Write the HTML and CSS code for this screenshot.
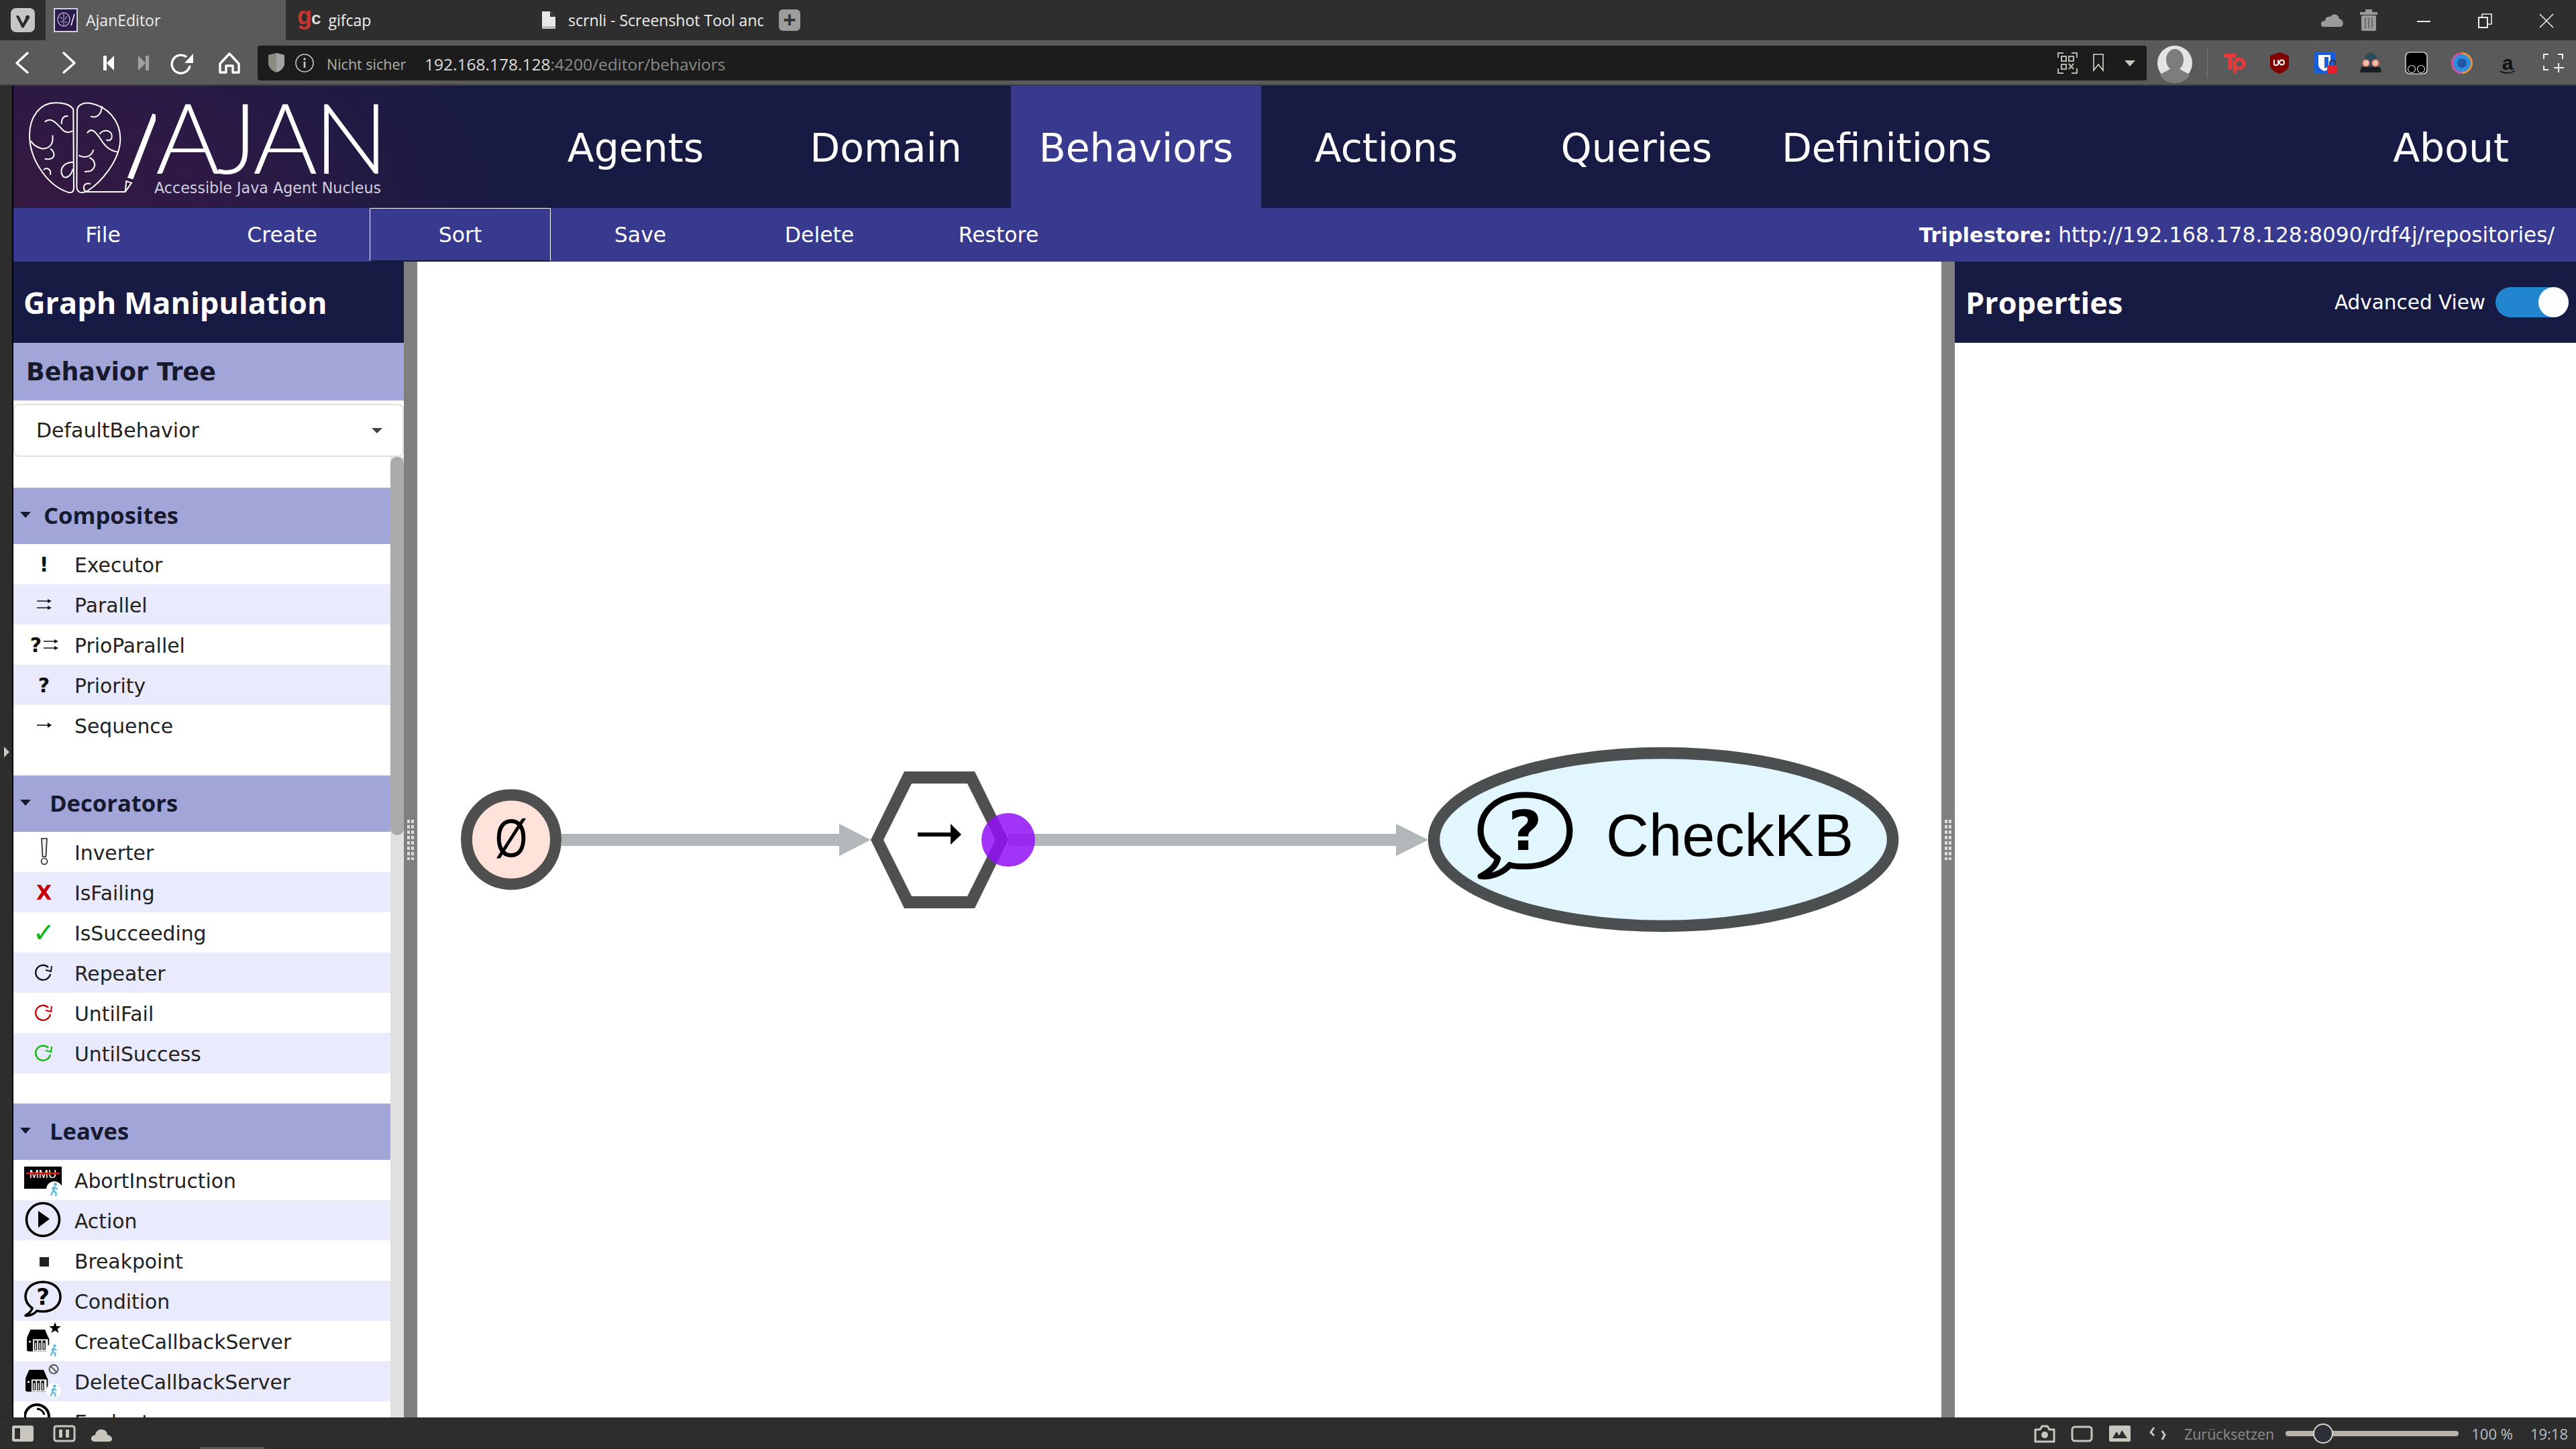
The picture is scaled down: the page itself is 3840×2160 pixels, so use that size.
FILE: index.html
```html
<!DOCTYPE html>
<html lang="en">
<head>
  <meta charset="UTF-8">
  <title>AjanEditor</title>
  <link rel="stylesheet" href="styles.css">
</head>
<body>

  <svg class="defs" width="0" height="0">
    <symbol id="walker" viewBox="0 0 24 24">
      <circle cx="12" cy="12" r="12" fill="#fff"/>
      <circle cx="13.5" cy="4.5" r="2.4" fill="#5cb8dc"/>
      <path d="M12.5 8 L10.5 14 L7 21 M11 14 L14.5 17 L14.5 22 M12.5 8.5 L16.5 12 M12 8.5 L8.5 11.5" fill="none" stroke="#5cb8dc" stroke-width="2.4"/>
    </symbol>
    <symbol id="bubble" viewBox="0 0 56 56" preserveAspectRatio="none">
      <path d="M12 41 C5 36 2 30 2 24 C2 11 13 2 28 2 C43 2 54 11 54 24 C54 37 43 46 28 46 C25 46 22 46 19 45 C16 49 9 53 2 52 C7 49 11 46 12 41 Z" fill="none" stroke="#000" stroke-width="3.6" stroke-linejoin="round"/>
      <text x="28" y="36" text-anchor="middle" class="bubble-mark">?</text>
    </symbol>
    <symbol id="store" viewBox="0 0 40 40">
      <path d="M6 0 H30 L36 14 H0 Z" fill="#000"/>
      <rect x="0" y="13" width="37" height="23" rx="3" fill="#000"/>
      <rect x="10" y="16" width="25" height="20" fill="#fff"/>
      <path d="M12 18 H17 V34 H12 Z M19 18 H24 V34 H19 Z M26 18 H31 V34 H26 Z" fill="#111"/>
      <path d="M13.5 22 H15.5 V33 H13.5 Z M20.5 22 H22.5 V33 H20.5 Z M27.5 22 H29.5 V33 H27.5 Z" fill="#ddd"/>
      <circle cx="5" cy="20" r="1.8" fill="#fff"/>
    </symbol>
    <symbol id="loop" viewBox="0 0 28 26">
      <path d="M20 5 A11 11 0 1 0 23 15" fill="none" stroke="currentColor" stroke-width="2.4"/>
      <path d="M25 3 L24 11 L16 9" fill="none" stroke="currentColor" stroke-width="2"/>
    </symbol>
    <symbol id="arrow-one" viewBox="0 0 24 12">
      <path d="M1 6 H21" stroke="#111" stroke-width="1.6"/>
      <path d="M17 2 L23 6 L17 10 Z" fill="#111"/>
    </symbol>
    <symbol id="arrow-two" viewBox="0 0 24 18">
      <path d="M1 4 H21 M1 14 H21" stroke="#111" stroke-width="1.6"/>
      <path d="M17 1 L23 4 L17 7 Z M17 11 L23 14 L17 17 Z" fill="#111"/>
    </symbol>
  </svg>

  <!-- browser tabs -->
  <div class="tabbar">
    <div class="tab-logo">
      <svg width="36" height="36" viewBox="0 0 36 36">
        <rect width="36" height="36" rx="8" fill="#c6c6c6"/>
        <path d="M8 12 C10 10 12 11 13 13 L18 23 L22 15 C21 11 27 9 28 13 C29 15 27 16 26 18 L20 28 C19 30 17 30 16 28 Z" fill="#2b2b2b"/>
      </svg>
    </div>
    <div class="tab tab-active">
      <svg width="36" height="36" viewBox="0 0 36 36">
        <rect x="1" y="1" width="34" height="34" fill="#2b1a4c" stroke="#cfcfd8" stroke-width="2"/>
        <ellipse cx="15" cy="17" rx="9" ry="10" fill="none" stroke="#cfc9e0" stroke-width="1.2"/>
        <path d="M15 7 V27 M9 13 L13 16 M20 12 L17 17 M10 21 L14 19 M20 22 L17 20" stroke="#cfc9e0" stroke-width="1"/>
        <path d="M31 9 L26 26" stroke="#e6e6f0" stroke-width="1.6"/>
      </svg>
      <span>AjanEditor</span>
    </div>
    <div class="tab tab-gifcap">
      <span class="gc-icon"><span class="gc-g">g</span><span class="gc-c">c</span></span>
      <span>gifcap</span>
    </div>
    <div class="tab tab-fade">
      <svg width="20" height="26" viewBox="0 0 20 26">
        <path d="M0 0 H12 L20 8 V26 H0 Z" fill="#e8e8e8"/>
        <path d="M12 0 L20 8 H12 Z" fill="#333"/>
        <rect y="22" width="20" height="4" fill="#bbb"/>
      </svg>
      <span>scrnli - Screenshot Tool and</span>
    </div>
    <div class="tab-add">+</div>
    <div class="spacer"></div>
    <svg class="window-controls" width="380" height="60" viewBox="3460 0 380 60">
      <path d="M3464 40 C3458 40 3458 31 3466 31 C3466 26 3470 24 3474 25 C3476 20 3486 20 3487 28 C3494 29 3495 40 3488 40 Z" fill="#9a9a9a"/>
      <rect x="3518" y="18" width="26" height="4" fill="#9a9a9a"/>
      <rect x="3526" y="14" width="10" height="4" fill="#9a9a9a"/>
      <rect x="3520" y="23" width="22" height="23" rx="2" fill="#9a9a9a"/>
      <path d="M3526 26 V42 M3531 26 V42 M3536 26 V42" stroke="#555" stroke-width="1.4"/>
      <rect x="3603" y="31" width="20" height="2" fill="#eee"/>
      <path d="M3695 26 H3708 V41 H3695 Z" fill="none" stroke="#eee" stroke-width="2"/>
      <path d="M3700 26 V21 H3714 V36 H3708" fill="none" stroke="#eee" stroke-width="1.6"/>
      <path d="M3786 21 L3806 41 M3806 21 L3786 41" stroke="#eee" stroke-width="1.6"/>
    </svg>
  </div>

  <!-- address bar -->
  <div class="addressbar">
    <svg class="nav-icons" width="384" height="66" viewBox="0 60 384 66">
      <path d="M41 79 L25 94 L41 108" fill="none" stroke="#fff" stroke-width="3.4" stroke-linecap="round" stroke-linejoin="round"/>
      <path d="M95 79 L111 94 L95 108" fill="none" stroke="#fff" stroke-width="3.4" stroke-linecap="round" stroke-linejoin="round"/>
      <path d="M154 83 H159 V105 H154 Z M170 83 V105 L159 94 Z" fill="#fff"/>
      <path d="M217 83 H222 V105 H217 Z M206 83 V105 L217 94 Z" fill="#a2a2a2"/>
      <path d="M283 98 A13.5 13.5 0 1 1 278 85" fill="none" stroke="#fff" stroke-width="3.4"/>
      <path d="M288 80 V94 H275 Z" fill="#fff"/>
      <path d="M328 95 L342 80 L356 95 V108 H347 V98 H337 V108 H328 Z" fill="none" stroke="#fff" stroke-width="3.4" stroke-linejoin="round"/>
    </svg>
    <div class="urlbar">
      <svg width="90" height="30" viewBox="0 0 90 30">
        <path d="M2 3 L14 0 L26 3 V15 C26 22 20 27 14 29 C8 27 2 22 2 15 Z" fill="#8d8a84"/>
        <path d="M14 0 L26 3 V15 C26 22 20 27 14 29 Z" fill="#a3a3a3"/>
        <circle cx="56" cy="15" r="13" fill="none" stroke="#c8c8c0" stroke-width="1.6"/>
        <circle cx="56" cy="9" r="1.8" fill="#c8c8c0"/>
        <rect x="54.6" y="13" width="2.8" height="9" fill="#c8c8c0"/>
      </svg>
      <span class="url-note">Nicht sicher</span>
      <span class="url-text">192.168.178.128<span class="url-dim">:4200/editor/behaviors</span></span>
      <div class="spacer"></div>
      <svg width="134" height="52" viewBox="3066 68 134 52">
        <path d="M3068 86 V79 H3076 M3088 79 H3096 V86 M3068 102 V109 H3076 M3088 109 H3096 V102" fill="none" stroke="#b9b9b0" stroke-width="2"/>
        <path d="M3073 84 H3080 V91 H3073 Z M3084 84 H3091 V91 H3084 Z M3073 96 H3080 V103 H3073 Z" fill="none" stroke="#b9b9b0" stroke-width="2"/>
        <path d="M3084 95 L3091 103 M3091 95 L3084 103" stroke="#b9b9b0" stroke-width="2"/>
        <path d="M3121 81 H3135 V105 L3128 96 L3121 105 Z" fill="none" stroke="#d8d8d0" stroke-width="1.6"/>
        <path d="M3167 90 H3183 L3175 99 Z" fill="#c8c8c0"/>
      </svg>
    </div>
    <svg class="ext-icons" width="640" height="66" viewBox="3200 60 640 66">
      <ellipse cx="3242" cy="94" rx="26" ry="26" fill="#e4e4e4"/>
      <ellipse cx="3242" cy="89" rx="13" ry="16" fill="#7d7d7d"/>
      <path d="M3220 112 C3225 106 3235 106 3236 100 H3248 C3249 106 3259 106 3264 112 A26 26 0 0 1 3220 112 Z" fill="#7d7d7d"/>
      <rect x="3290" y="72" width="1" height="44" fill="#777"/>
      <path d="M3315 80 H3333 V86 H3328 V103 H3321 V86 H3315 Z" fill="#e83a3a"/>
      <circle cx="3338" cy="95" r="7" fill="none" stroke="#e83a3a" stroke-width="5"/>
      <rect x="3329" y="92" width="5" height="17" fill="#e83a3a"/>
      <path d="M3398 78 L3412 83 V97 C3412 103 3405 108 3398 110 C3391 108 3384 103 3384 97 V83 Z" fill="#800000"/>
      <path d="M3390 89 V95 C3390 98 3396 98 3396 95 V89 M3398 93 A3.5 3.5 0 1 1 3405 93 A3.5 3.5 0 1 1 3398 93" fill="none" stroke="#fff" stroke-width="2"/>
      <rect x="3450" y="78" width="32" height="32" rx="3" fill="#175ddc"/>
      <path d="M3456 82 H3474 V96 C3474 101 3470 104 3465 106 C3460 104 3456 101 3456 96 Z" fill="#fff"/>
      <path d="M3465 85 H3471 V96 C3471 98 3468 101 3465 102 Z" fill="#175ddc"/>
      <path d="M3473 97 V94 A4 4 0 0 1 3481 94 V97" fill="none" stroke="#333" stroke-width="2"/>
      <rect x="3469" y="97" width="15" height="13" rx="1" fill="#e3222c"/>
      <path d="M3534 78 C3526 78 3524 90 3524 96 L3518 108 H3550 L3544 96 C3544 90 3542 78 3534 78 Z" fill="#2b4a5c"/>
      <path d="M3520 100 H3548 L3550 108 H3518 Z" fill="#161d24"/>
      <circle cx="3527" cy="94" r="5" fill="#e8c0b0" stroke="#e86a50" stroke-width="1.5"/>
      <circle cx="3541" cy="94" r="5" fill="#e8c0b0" stroke="#e86a50" stroke-width="1.5"/>
      <rect x="3586" y="78" width="32" height="32" rx="6" fill="#000" stroke="#fff" stroke-width="1.2"/>
      <circle cx="3595" cy="103" r="5.5" fill="none" stroke="#ddd" stroke-width="1.2"/>
      <circle cx="3609" cy="103" r="5.5" fill="none" stroke="#ddd" stroke-width="1.2"/>
      <circle cx="3670" cy="94" r="16" fill="#e8933c"/>
      <path d="M3670 78 A16 16 0 0 0 3654 94 A16 16 0 0 0 3670 110 Z" fill="#cf4fa0"/>
      <circle cx="3670" cy="94" r="13" fill="#2f8de0"/>
      <circle cx="3670" cy="94" r="7" fill="#2456a8"/>
      <text x="3738" y="104" text-anchor="middle" class="ext-amazon">a</text>
      <path d="M3727 106 C3733 110 3743 110 3749 105" fill="none" stroke="#111" stroke-width="1.6"/>
      <path d="M3792 88 V81 H3799 M3813 81 H3820 V88 M3792 98 V104 H3799" fill="none" stroke="#eee" stroke-width="2"/>
      <path d="M3814 94 V108 M3807 101 H3822" stroke="#eee" stroke-width="2"/>
    </svg>
  </div>

  <div class="page">
    <div class="frame"><span class="frame-arrow"></span></div>

    <div class="app">
      <div class="topnav">
        <div class="logo">
          <svg width="212" height="180" viewBox="0 0 636 540" class="logo-mark">
            <g fill="none" stroke="#fff" stroke-width="6">
              <path d="M268 100 C255 75 215 68 185 70 C120 72 72 130 72 215 C72 320 150 440 245 470 C262 474 270 468 270 450 Z"/>
              <path d="M285 100 C290 75 320 68 345 72 C420 85 478 150 478 230 C478 320 400 420 330 465 C300 478 285 470 283 445 Z"/>
              <path d="M140 155 C170 130 195 165 215 185 C230 205 250 205 265 195"/>
              <path d="M215 165 C215 135 230 125 245 130"/>
              <path d="M175 215 C180 250 165 275 130 275 C105 270 85 255 78 240"/>
              <path d="M165 275 C190 290 190 330 140 320"/>
              <path d="M268 335 C240 335 210 350 215 385 C225 420 258 400 266 365"/>
              <path d="M135 370 C145 358 170 362 165 392"/>
              <path d="M345 130 C370 140 395 125 395 85"/>
              <path d="M330 205 C350 175 370 205 385 225 C410 265 430 285 470 290"/>
              <path d="M385 210 C400 185 445 190 440 225 C435 240 425 240 415 235"/>
              <path d="M292 305 C320 320 350 310 358 280"/>
              <path d="M340 315 C365 325 375 355 345 375 L318 378"/>
              <path d="M345 432 C315 425 305 450 325 468"/>
              <path d="M320 468 H500 L528 428 L505 420 L500 468"/>
              <path d="M622 118 L645 125 L535 412 L510 405 Z" fill="#fff" stroke="none"/>
            </g>
          </svg>
          <div class="logo-text">
            <span class="logo-name">AJAN</span>
            <span class="logo-tag">Accessible Java Agent Nucleus</span>
          </div>
        </div>
        <a class="nav-item">Agents</a>
        <a class="nav-item">Domain</a>
        <a class="nav-item nav-active">Behaviors</a>
        <a class="nav-item">Actions</a>
        <a class="nav-item">Queries</a>
        <a class="nav-item">Definitions</a>
        <a class="nav-item nav-right">About</a>
      </div>

      <div class="toolbar">
        <a class="tool">File</a>
        <a class="tool">Create</a>
        <a class="tool tool-focus">Sort</a>
        <a class="tool">Save</a>
        <a class="tool">Delete</a>
        <a class="tool">Restore</a>
        <div class="triplestore"><b>Triplestore:</b> http://192.168.178.128:8090/rdf4j/repositories/</div>
      </div>

      <div class="workspace">
        <div class="sidebar">
          <div class="panel-head"><h2>Graph Manipulation</h2></div>
          <div class="tree-head">Behavior Tree</div>
          <div class="select">DefaultBehavior<span class="select-caret"></span></div>
          <div class="palette">
            <div class="palette-list">
              <div class="band band-first"><span class="caret"></span>Composites</div>
              <div class="row"><span class="ico ico-bold">!</span>Executor</div>
              <div class="row alt"><span class="ico"><svg width="24" height="18"><use href="#arrow-two"/></svg></span>Parallel</div>
              <div class="row"><span class="ico ico-pair"><span class="ico-bold">?</span><svg width="24" height="18"><use href="#arrow-two"/></svg></span>PrioParallel</div>
              <div class="row alt"><span class="ico ico-bold">?</span>Priority</div>
              <div class="row"><span class="ico"><svg width="24" height="12"><use href="#arrow-one"/></svg></span>Sequence</div>

              <div class="band"><span class="caret"></span>Decorators</div>
              <div class="row">
                <span class="ico">
                  <svg width="12" height="42" viewBox="0 0 12 42">
                    <path d="M2 1 H10 L8.5 28 H3.5 Z" fill="#eee" stroke="#222" stroke-width="1.6"/>
                    <circle cx="6" cy="35" r="4.5" fill="#fff" stroke="#222" stroke-width="1.6"/>
                  </svg>
                </span>Inverter
              </div>
              <div class="row alt"><span class="ico ico-bold ico-red ico-x">X</span>IsFailing</div>
              <div class="row"><span class="ico ico-green ico-check">✓</span>IsSucceeding</div>
              <div class="row alt"><span class="ico"><svg width="28" height="26"><use href="#loop"/></svg></span>Repeater</div>
              <div class="row"><span class="ico ico-red"><svg width="28" height="26"><use href="#loop"/></svg></span>UntilFail</div>
              <div class="row alt"><span class="ico ico-green"><svg width="28" height="26"><use href="#loop"/></svg></span>UntilSuccess</div>

              <div class="band"><span class="caret"></span>Leaves</div>
              <div class="row">
                <span class="ico">
                  <svg width="60" height="60" viewBox="0 0 60 60">
                    <rect x="0" y="10" width="56" height="33" fill="#000"/>
                    <text x="28" y="27" text-anchor="middle" class="mmu">MMU</text>
                    <rect x="3" y="19" width="50" height="2.4" fill="#d81818"/>
                    <use href="#walker" x="33" y="32" width="24" height="24"/>
                  </svg>
                </span>AbortInstruction
              </div>
              <div class="row alt">
                <span class="ico">
                  <svg width="60" height="60" viewBox="0 0 60 60">
                    <circle cx="28" cy="29" r="24.5" fill="none" stroke="#000" stroke-width="3.6"/>
                    <path d="M21 16 L38 28 L21 41 Z" fill="#000"/>
                  </svg>
                </span>Action
              </div>
              <div class="row">
                <span class="ico"><span class="square"></span></span>Breakpoint
              </div>
              <div class="row alt">
                <span class="ico">
                  <svg width="60" height="60" viewBox="0 0 60 60"><use href="#bubble" x="0" y="0" width="56" height="56"/></svg>
                </span>Condition
              </div>
              <div class="row">
                <span class="ico">
                  <svg width="60" height="60" viewBox="0 0 60 60">
                    <use href="#store" x="4" y="13" width="36" height="36"/>
                    <path d="M46 2 L48.3 8 H54.8 L49.6 12 L51.5 18 L46 14.5 L40.5 18 L42.4 12 L37.2 8 H43.7 Z" fill="#000"/>
                    <use href="#walker" x="33" y="33" width="22" height="22"/>
                  </svg>
                </span>CreateCallbackServer
              </div>
              <div class="row alt">
                <span class="ico">
                  <svg width="60" height="60" viewBox="0 0 60 60">
                    <use href="#store" x="2" y="13" width="36" height="36"/>
                    <circle cx="44" cy="12" r="6.5" fill="none" stroke="#555" stroke-width="2"/>
                    <path d="M39.5 7.5 L48.5 16.5" stroke="#555" stroke-width="2"/>
                    <use href="#walker" x="33" y="33" width="22" height="22"/>
                  </svg>
                </span>DeleteCallbackServer
              </div>
              <div class="row">
                <span class="ico">
                  <svg width="60" height="60" viewBox="0 0 60 60">
                    <circle cx="19" cy="23" r="18" fill="none" stroke="#000" stroke-width="4"/>
                    <path d="M19 11 A12 12 0 0 1 30 20" fill="none" stroke="#000" stroke-width="3"/>
                  </svg>
                </span>Evaluate
              </div>
            </div>
            <div class="scrollbar"><div class="scroll-thumb"></div></div>
          </div>
        </div>

        <div class="gutter"><span class="grip"></span></div>

        <div class="canvas">
          <svg class="graph" width="2272" height="1723" viewBox="622 390 2272 1723">
            <rect x="837" y="1243" width="420" height="18" fill="#b2b7ba"/>
            <path d="M1251 1228 L1298 1252 L1251 1276 Z" fill="#b2b7ba"/>
            <rect x="1503" y="1243" width="584" height="18" fill="#b2b7ba"/>
            <path d="M2081 1228 L2129 1252 L2081 1276 Z" fill="#b2b7ba"/>

            <circle cx="762" cy="1251.5" r="66.5" fill="#ffe2da" stroke="#4f4f4f" stroke-width="17"/>
            <text transform="translate(762 1277) scale(0.78 1)" text-anchor="middle" class="node-symbol">Ø</text>

            <path d="M1298 1252 L1348 1150 H1453 L1503 1252 L1453 1354 H1348 Z M1317 1252 L1359 1336 H1442 L1484 1252 L1442 1168 H1359 Z" fill="#4f4f4f" fill-rule="evenodd"/>
            <path d="M1368 1241 H1417 V1228 L1433 1244 L1417 1259 V1247 H1368 Z" fill="#000"/>
            <circle cx="1503" cy="1252" r="40" fill="#9010f5" fill-opacity="0.85"/>

            <ellipse cx="2479.5" cy="1251.5" rx="342" ry="129" fill="#e2f6fe" stroke="#4b4f50" stroke-width="17.5"/>
            <use href="#bubble" x="2202" y="1180" width="143" height="136"/>
            <text x="2394" y="1276" class="node-label">CheckKB</text>
          </svg>
        </div>

        <div class="gutter"><span class="grip"></span></div>

        <div class="properties">
          <div class="panel-head panel-head-split">
            <h2>Properties</h2>
            <div class="advanced">Advanced View<span class="toggle"><span class="toggle-knob"></span></span></div>
          </div>
        </div>
      </div>
    </div>
  </div>

  <!-- browser status bar -->
  <div class="statusbar">
    <svg width="170" height="47" viewBox="0 2113 170 47" class="status-left">
      <rect x="18" y="2124" width="32" height="24" rx="3" fill="#c8c6be"/>
      <rect x="22" y="2128" width="8" height="16" fill="#2d2d2d"/>
      <rect x="81" y="2125" width="30" height="22" rx="3" fill="none" stroke="#c8c6be" stroke-width="3"/>
      <rect x="88" y="2130" width="5" height="12" fill="#c8c6be"/>
      <rect x="98" y="2130" width="5" height="12" fill="#c8c6be"/>
      <path d="M141 2148 C134 2148 134 2139 142 2138 C143 2132 148 2129 152 2130 C157 2130 160 2134 160 2138 C168 2139 170 2148 162 2148 Z" fill="#c8c6be"/>
    </svg>
    <div class="spacer"></div>
    <svg width="200" height="47" viewBox="3030 2113 200 47">
      <path d="M3035 2130 H3042 L3045 2125 H3053 L3056 2130 H3063 V2148 H3035 Z" fill="none" stroke="#c8c6be" stroke-width="3" stroke-linejoin="round"/>
      <circle cx="3049" cy="2138" r="5" fill="#c8c6be"/>
      <rect x="3090" y="2126" width="29" height="21" rx="4" fill="none" stroke="#c8c6be" stroke-width="3"/>
      <rect x="3145" y="2124" width="32" height="24" rx="2" fill="#c8c6be"/>
      <path d="M3150 2143 L3156 2133 L3160 2139 L3164 2131 L3172 2143 Z" fill="#2d2d2d"/>
      <path d="M3212 2127 L3207 2134 L3212 2139 M3224 2132 L3228 2138 L3224 2145" fill="none" stroke="#c8c6be" stroke-width="3"/>
    </svg>
    <span class="status-reset">Zurücksetzen</span>
    <span class="slider"><span class="slider-knob"></span></span>
    <span class="status-zoom">100 %</span>
    <span class="status-time">19:18</span>
    <span class="status-peek"></span>
  </div>

</body>
</html>
```

FILE: styles.css
```css
* {
  box-sizing: border-box;
}
html, body {
  margin: 0;
  width: 3840px;
  height: 2160px;
  overflow: hidden;
}
body {
  display: flex;
  flex-direction: column;
  background: #2d2d2d;
  font-family: "DejaVu Sans", sans-serif;
}
svg {
  display: block;
  flex: none;
}
.defs {
  position: absolute;
}
.bubble-mark {
  font-family: "DejaVu Sans", sans-serif;
  font-weight: 700;
  font-size: 34px;
  fill: #000;
}
.spacer {
  flex: 1;
}

/* browser chrome */
.tabbar {
  height: 60px;
  display: flex;
  align-items: stretch;
  background: #2e2e2e;
  font-family: "Open Sans", sans-serif;
  font-size: 23px;
  color: #eee;
}
.tab-logo {
  width: 68px;
  padding: 12px 0 0 16px;
}
.tab {
  width: 358px;
  display: flex;
  align-items: center;
  gap: 12px;
  padding-left: 12px;
  white-space: nowrap;
  overflow: hidden;
}
.tab-active {
  background: #5a5a5a;
}
.tab-gifcap {
  padding-left: 17px;
  gap: 11px;
}
.tab-fade {
  width: 354px;
  padding-left: 24px;
  gap: 19px;
}
.tab-fade span {
  width: 292px;
  overflow: hidden;
}
.gc-icon {
  font-family: "Liberation Sans", sans-serif;
  font-weight: 700;
  font-size: 36px;
  line-height: 36px;
  margin-top: -10px;
}
.gc-g {
  color: #c8372d;
}
.gc-c {
  color: #ddd;
  margin-left: -1px;
  font-size: 26px;
}
.tab-add {
  width: 32px;
  height: 32px;
  margin: 14px 0 0 23px;
  border-radius: 6px;
  background: #9c9c9c;
  color: #333;
  font-size: 34px;
  font-weight: 700;
  line-height: 30px;
  text-align: center;
}
.addressbar {
  height: 68px;
  display: flex;
  background: #5a5a5a;
  border-bottom: 2px solid #3a3a3a;
}
.urlbar {
  width: 2816px;
  height: 52px;
  margin-top: 8px;
  display: flex;
  align-items: center;
  padding-left: 14px;
  background: #1c1c1c;
  border-radius: 4px;
  font-family: "Open Sans", sans-serif;
  font-size: 21.5px;
  color: #ddd;
}
.url-note {
  color: #b0b0a8;
  margin: 2px 0 0 -1px;
  width: 146px;
}
.url-text {
  margin-top: 2px;
  font-size: 24.5px;
}
.url-dim {
  color: #8a8a8a;
}
.ext-amazon {
  font-family: "Liberation Sans", sans-serif;
  font-weight: 700;
  font-size: 30px;
  fill: #111;
}

/* app */
.page {
  flex: 1;
  display: flex;
  min-height: 0;
}
.frame {
  width: 20px;
  display: flex;
  align-items: center;
  background: #2d2d2d;
  border-right: 2px solid #000;
  padding-left: 6px;
}
.frame-arrow {
  border-left: 8px solid #c8c8c0;
  border-top: 8px solid transparent;
  border-bottom: 8px solid transparent;
}
.app {
  flex: 1;
  display: flex;
  flex-direction: column;
  min-width: 0;
  background: #fff;
}
.topnav {
  height: 182px;
  display: flex;
  background: #171a42;
}
.logo {
  width: 741px;
  display: flex;
  background: radial-gradient(ellipse 760px 400px at 0 100%, #35183f 0%, #2c1a45 45%, #171a42 100%);
}
.logo-mark {
  margin-top: 2px;
}
.logo-text {
  display: flex;
  flex-direction: column;
  color: #fff;
}
.logo-name {
  font-family: Lato, sans-serif;
  font-weight: 300;
  font-size: 147px;
  line-height: 128px;
  height: 128px;
  margin-top: 10px;
  letter-spacing: -5.5px;
}
.logo-tag {
  font-size: 22.2px;
  line-height: 28px;
  color: #cfcfe0;
  margin-left: -2px;
  white-space: nowrap;
}
.nav-item {
  width: 373px;
  display: flex;
  align-items: center;
  justify-content: center;
  padding-top: 3px;
  font-size: 58.4px;
  color: #fff;
}
.nav-active {
  background: #383a8f;
}
.nav-right {
  margin-left: auto;
}
.toolbar {
  height: 80px;
  display: flex;
  align-items: center;
  background: #383a8f;
  color: #fff;
  font-size: 31.5px;
}
.tool {
  width: 267px;
  height: 100%;
  display: flex;
  align-items: center;
  justify-content: center;
}
.tool-focus {
  border: 1px solid #fff;
  border-bottom: 2px solid #161a42;
  border-radius: 2px;
  margin-left: -3px;
  width: 270px;
}
.triplestore {
  margin-left: auto;
  padding-right: 32px;
  font-size: 31.2px;
}
.triplestore b {
  font-size: 30.5px;
}

.workspace {
  flex: 1;
  display: flex;
  min-height: 0;
}
.sidebar {
  width: 582px;
  flex: none;
  display: flex;
  flex-direction: column;
  background: #fff;
}
.panel-head {
  height: 121px;
  display: flex;
  align-items: center;
  padding-left: 15px;
  background: #171a42;
  color: #fff;
}
.panel-head h2 {
  margin: 0;
  font-family: "Open Sans", sans-serif;
  font-size: 45px;
  font-weight: 700;
}
.panel-head-split {
  justify-content: space-between;
  padding: 0 11px 0 16px;
}
.advanced {
  display: flex;
  align-items: center;
  gap: 15px;
  font-size: 29.5px;
}
.toggle {
  width: 109px;
  height: 45px;
  display: flex;
  justify-content: flex-end;
  border-radius: 23px;
  background: #2185d0;
}
.toggle-knob {
  width: 45px;
  height: 45px;
  border-radius: 50%;
  background: #fff;
}
.tree-head {
  height: 86px;
  display: flex;
  align-items: center;
  padding-left: 19px;
  background: #a1a5d8;
  color: #171a2f;
  font-size: 36.4px;
  font-weight: 700;
}
.select {
  height: 79px;
  margin-top: 5px;
  display: flex;
  align-items: center;
  justify-content: space-between;
  padding: 0 30px 0 32px;
  border: 2px solid #e2e2e2;
  border-radius: 8px;
  font-size: 30px;
  color: #222;
}
.select-caret {
  border-top: 8px solid #444;
  border-left: 8px solid transparent;
  border-right: 8px solid transparent;
}
.palette {
  flex: 1;
  display: flex;
  min-height: 0;
}
.palette-list {
  flex: 1;
  overflow: hidden;
  color: #222;
  font-size: 29.8px;
}
.band {
  height: 84px;
  margin-top: 45px;
  display: flex;
  align-items: center;
  gap: 28px;
  padding: 0 0 3px 10px;
  background: #a1a5d8;
  color: #171a2f;
  font-family: "Open Sans", sans-serif;
  font-size: 34.6px;
  font-weight: 700;
}
.band-first {
  margin-top: 46px;
  gap: 19px;
}
.caret {
  border-top: 9px solid #171a2f;
  border-left: 8.5px solid transparent;
  border-right: 8.5px solid transparent;
}
.row {
  height: 60px;
  display: flex;
  align-items: center;
  padding-top: 2px;
  white-space: nowrap;
}
.row.alt {
  background: #e9ebfc;
}
.ico {
  width: 91px;
  height: 60px;
  margin-top: -2px;
  flex: none;
  display: flex;
  align-items: center;
  justify-content: center;
  font-size: 30px;
  color: #111;
}
.ico-pair {
  gap: 2px;
  padding-left: 2px;
}
.ico-bold {
  font-weight: 700;
}
.ico-red {
  color: #c40000;
}
.ico-green {
  color: #08b808;
}
.ico-x {
  font-size: 30px;
}
.ico-check {
  font-size: 40px;
}
.square {
  width: 14px;
  height: 14px;
  background: #222;
  margin-top: 4px;
}
.mmu {
  font-family: "Liberation Sans", sans-serif;
  font-size: 17px;
  fill: #fff;
}
.scrollbar {
  width: 20px;
  background: #e0e0e0;
}
.scroll-thumb {
  height: 564px;
  background: #aaa;
  border-radius: 10px;
}
.gutter {
  width: 20px;
  flex: none;
  display: flex;
  align-items: center;
  justify-content: center;
  background: #808080;
}
.grip {
  width: 10px;
  height: 60px;
  background-image:
    repeating-linear-gradient(90deg, transparent 0 4px, #808080 4px 6px),
    repeating-linear-gradient(#dcdcdc 0 5px, #808080 5px 8px);
}
.canvas {
  flex: 1;
  background: #fff;
  min-width: 0;
}
.node-symbol,
.node-label {
  font-family: "Liberation Sans", sans-serif;
  fill: #000;
}
.node-symbol {
  font-size: 80px;
}
.node-label {
  font-size: 88.5px;
}
.properties {
  width: 926px;
  flex: none;
  background: #fff;
}

/* status bar */
.statusbar {
  height: 47px;
  position: relative;
  display: flex;
  align-items: center;
  background: #2d2d2d;
  border-top: 1px solid #222;
  font-family: "Open Sans", sans-serif;
  font-size: 22px;
  color: #b8c0c4;
}
.status-left {
  height: 47px;
}
.status-reset {
  margin-left: 27px;
  font-size: 21.5px;
  color: #8e8e8e;
}
.slider {
  width: 258px;
  height: 8px;
  margin-left: 17px;
  display: flex;
  align-items: center;
  padding-left: 41px;
  border-radius: 4px;
  background: #b8b4aa;
}
.slider-knob {
  flex: none;
  width: 30px;
  height: 30px;
  border-radius: 50%;
  background: #2d3038;
  border: 2px solid #d8d6ce;
}
.status-zoom {
  margin-left: 19px;
}
.status-time {
  margin: 0 12px 0 26px;
}
.status-peek {
  position: absolute;
  left: 298px;
  bottom: 0;
  width: 96px;
  height: 3px;
  background: #555;
}
```
